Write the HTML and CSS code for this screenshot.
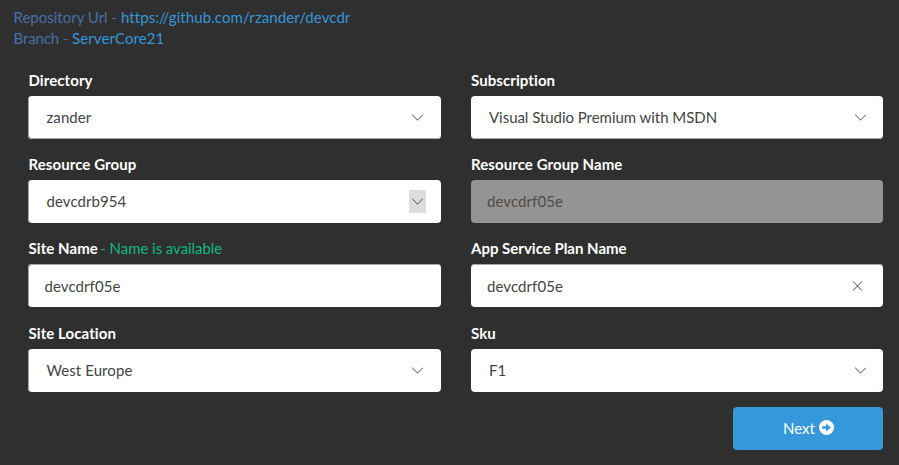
FILE: index.html
```html
<!DOCTYPE html>
<html lang="en">
<head>
<meta charset="utf-8">
<title>Deploy</title>
<link rel="stylesheet" href="styles.css">
</head>
<body>
<header class="repo">
  <div>Repository Url - <a>https://github.com/rzander/devcdr</a></div>
  <div class="branch">Branch - <a>ServerCore21</a></div>
</header>
<main class="form">
  <div class="field left"><label>Directory</label><div class="control select edge-bottom"><span>zander</span><i class="arrow"><svg viewBox="0 0 17 23"><path d="M3.2 8.8l5.3 5.3 5.3-5.3"/></svg></i></div></div>
  <div class="field"><label>Subscription</label><div class="control select edge-bottom"><span class="tight">Visual Studio Premium with MSDN</span><i class="arrow"><svg viewBox="0 0 17 23"><path d="M3.2 8.8l5.3 5.3 5.3-5.3"/></svg></i></div></div>
  <div class="field left"><label>Resource Group</label><div class="control select"><span>devcdrb954</span><i class="arrow hover"><svg viewBox="0 0 17 23"><path d="M3.2 8.8l5.3 5.3 5.3-5.3"/></svg></i></div></div>
  <div class="field"><label>Resource Group Name</label><div class="control disabled"><span>devcdrf05e</span></div></div>
  <div class="field left"><label>Site Name<span class="ok"> - Name is available</span></label><div class="control edge-top"><span>devcdrf05e</span></div></div>
  <div class="field"><label class="plain">App Service Plan Name</label><div class="control edge-top"><span>devcdrf05e</span><i class="arrow"><svg viewBox="0 0 17 23"><path d="M4 6.5l9 9M13 6.5l-9 9"/></svg></i></div></div>
  <div class="field left"><label>Site Location</label><div class="control select"><span>West Europe</span><i class="arrow"><svg viewBox="0 0 17 23"><path d="M3.2 8.8l5.3 5.3 5.3-5.3"/></svg></i></div></div>
  <div class="field"><label>Sku</label><div class="control select"><span>F1</span><i class="arrow"><svg viewBox="0 0 17 23"><path d="M3.2 8.8l5.3 5.3 5.3-5.3"/></svg></i></div></div>
</main>
<footer class="actions">
  <button class="next">Next <svg viewBox="0 0 16 16"><circle cx="8" cy="8" r="8" fill="#fff"/><path d="M3.5 6.7h4V3.8L12.7 8l-5.2 4.2V9.3h-4z" fill="#3498db"/></svg></button>
</footer>
</body>
</html>
```
FILE: styles.css
```css
* { box-sizing: border-box; }
body {
  margin: 0;
  padding: 7px 16px 0 13px;
  background: #2f2f2f;
  color: #fff;
  font: 15px/21px Lato, sans-serif;
  font-variant-ligatures: none;
}
.repo { padding-left: .5px; color: #4870a8; }
.repo a { color: #3498db; letter-spacing: .08px; }
.branch { letter-spacing: -.1px; }
.form {
  display: grid;
  grid-template-columns: 413px 412px;
  column-gap: 30px;
  grid-template-rows: 84px 84px 85px 84px;
  margin: 21px 0 0 15px;
}
label {
  display: block;
  height: 26px;
  font-weight: 700;
  letter-spacing: .08px;
}
.left label { padding-left: .5px; }
label.plain { letter-spacing: 0; }
.ok {
  margin-left: -1.5px;
  color: #10b981;
  font-weight: 400;
  letter-spacing: -.05px;
}
.control {
  --edge-x: 0;
  display: flex;
  align-items: center;
  justify-content: space-between;
  height: 43px;
  padding: 0 17px 0 16px;
  border-radius: 4px;
  background: #fff;
  color: #444;
  letter-spacing: .08px;
}
.left .control {
  --edge-x: 1px;
  padding-left: 16.5px;
  box-shadow: inset 1px 0 #aaa;
}
.select { padding: 0 14.5px 0 18px; }
.left .select { padding: 0 15px 0 18.5px; }
.control.edge-bottom { box-shadow: inset var(--edge-x) -1px #aaa; }
.control.edge-top {
  padding-top: 2px;
  box-shadow: inset var(--edge-x) 1px #aaa;
}
.tight { letter-spacing: -.04px; }
.disabled { background: #969492; color: #4c4b4a; }
.arrow { width: 17px; height: 23px; }
.arrow svg {
  display: block;
  width: 17px;
  height: 23px;
  fill: none;
  stroke: #444;
}
.hover { background: #ddd; }
.actions {
  display: flex;
  justify-content: flex-end;
}
.next {
  display: flex;
  align-items: center;
  justify-content: center;
  gap: 4px;
  width: 150px;
  height: 43px;
  padding: 0 0 0 1px;
  border: 0;
  border-radius: 4px;
  background: #3498db;
  color: #fff;
  font: inherit;
}
.next svg { width: 15px; height: 15px; margin-top: -2px; }
```
